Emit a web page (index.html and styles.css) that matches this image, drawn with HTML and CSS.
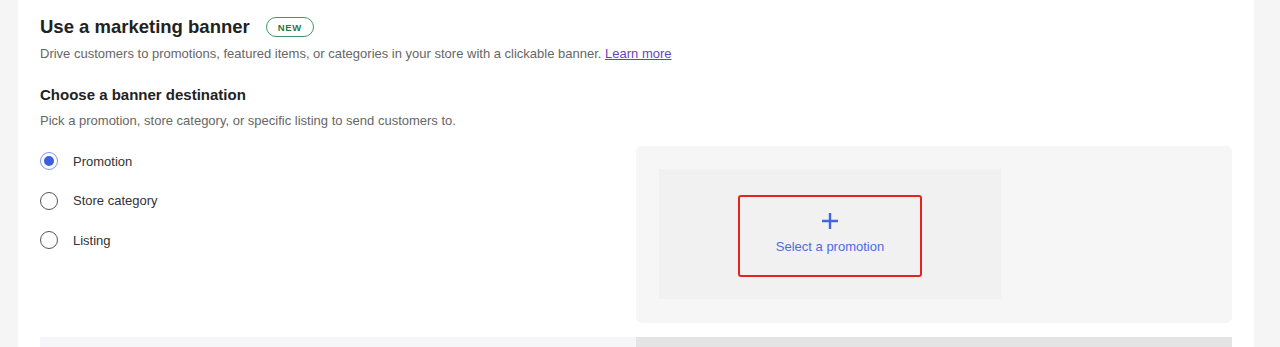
FILE: index.html
```html
<!DOCTYPE html>
<html lang="en">
<head>
  <meta charset="UTF-8">
  <title>Marketing banner</title>
  <link rel="stylesheet" href="styles.css">
</head>
<body>
  <main class="card">
    <div class="title-row">
      <h1 class="title">Use a marketing banner</h1>
      <span class="badge">NEW</span>
    </div>
    <p class="lead">Drive customers to promotions, featured items, or categories in your store with a clickable banner. <a href="#" class="link">Learn more</a></p>

    <h2 class="subtitle">Choose a banner destination</h2>
    <p class="hint">Pick a promotion, store category, or specific listing to send customers to.</p>

    <div class="chooser">
      <div class="options">
        <label class="option"><span class="radio checked"></span>Promotion</label>
        <label class="option"><span class="radio"></span>Store category</label>
        <label class="option"><span class="radio"></span>Listing</label>
      </div>
      <div class="preview">
        <div class="slot">
          <button class="pick">
            <svg width="18" height="18" viewBox="0 0 18 18"><path d="M9 1v16M1 9h16" stroke="#4166e0" stroke-width="2.4" fill="none"/></svg>
            <span>Select a promotion</span>
          </button>
        </div>
      </div>
    </div>

    <div class="next-row">
      <div class="next-left"></div>
      <div class="next-right"></div>
    </div>
  </main>
</body>
</html>
```

FILE: styles.css
```css
* {
  box-sizing: border-box;
  margin: 0;
}
html, body {
  height: 100%;
}
body {
  background: #f5f5f5;
  font-family: "Liberation Sans", Arial, sans-serif;
  color: #222;
  overflow: hidden;
}
.card {
  margin: 0 26px 0 18px;
  background: #fff;
  padding: 15px 22px 0 22px;
  height: 100%;
}
.title-row {
  display: flex;
  align-items: center;
  gap: 16px;
  height: 24px;
}
.title {
  font-size: 18.5px;
  font-weight: bold;
  color: #222;
}
.badge {
  border: 1.5px solid #3a9a6a;
  border-radius: 12px;
  width: 48px;
  height: 20px;
  display: flex;
  align-items: center;
  justify-content: center;
  font-size: 9.5px;
  font-weight: bold;
  letter-spacing: 0.6px;
  color: #1f7a4a;
}
.lead {
  margin-top: 7px;
  font-size: 13px;
  color: #666;
  line-height: 16px;
}
.link {
  color: #6a3fc4;
}
.subtitle {
  margin-top: 24px;
  font-size: 15px;
  font-weight: bold;
  color: #222;
  line-height: 18px;
}
.hint {
  margin-top: 9px;
  font-size: 13px;
  color: #666;
  line-height: 16px;
}
.chooser {
  margin-top: 17px;
  display: grid;
  grid-template-columns: 1fr 1fr;
}
.options {
  display: flex;
  flex-direction: column;
  gap: 19.5px;
  padding-top: 5px;
}
.option {
  display: flex;
  align-items: center;
  gap: 15px;
  font-size: 13px;
  color: #333;
  height: 20px;
}
.radio {
  width: 18px;
  height: 18px;
  border-radius: 50%;
  border: 1.5px solid #555;
  display: flex;
  align-items: center;
  justify-content: center;
}
.radio.checked {
  border-color: #7e98f0;
}
.radio.checked::after {
  content: "";
  width: 10px;
  height: 10px;
  border-radius: 50%;
  background: #3b5fe0;
}
.preview {
  background: #f6f6f7;
  border-radius: 6px;
  padding: 23px 23px 24px;
  height: 177px;
}
.slot {
  width: 342px;
  height: 130px;
  background: #f1f1f2;
  display: flex;
  align-items: center;
  justify-content: center;
  padding-top: 4px;
}
.pick {
  width: 184px;
  height: 82px;
  border: 2px solid #e8231f;
  border-radius: 3px;
  background: transparent;
  display: flex;
  flex-direction: column;
  align-items: center;
  justify-content: center;
  gap: 9px;
  font-family: inherit;
  font-size: 13px;
  color: #4f6cdc;
  padding: 0 0 6px;
}
.next-row {
  margin-top: 14px;
  display: grid;
  grid-template-columns: 1fr 1fr;
  height: 20px;
}
.next-left {
  background: #f6f5f7;
}
.next-right {
  background: #e4e4e5;
}
```
